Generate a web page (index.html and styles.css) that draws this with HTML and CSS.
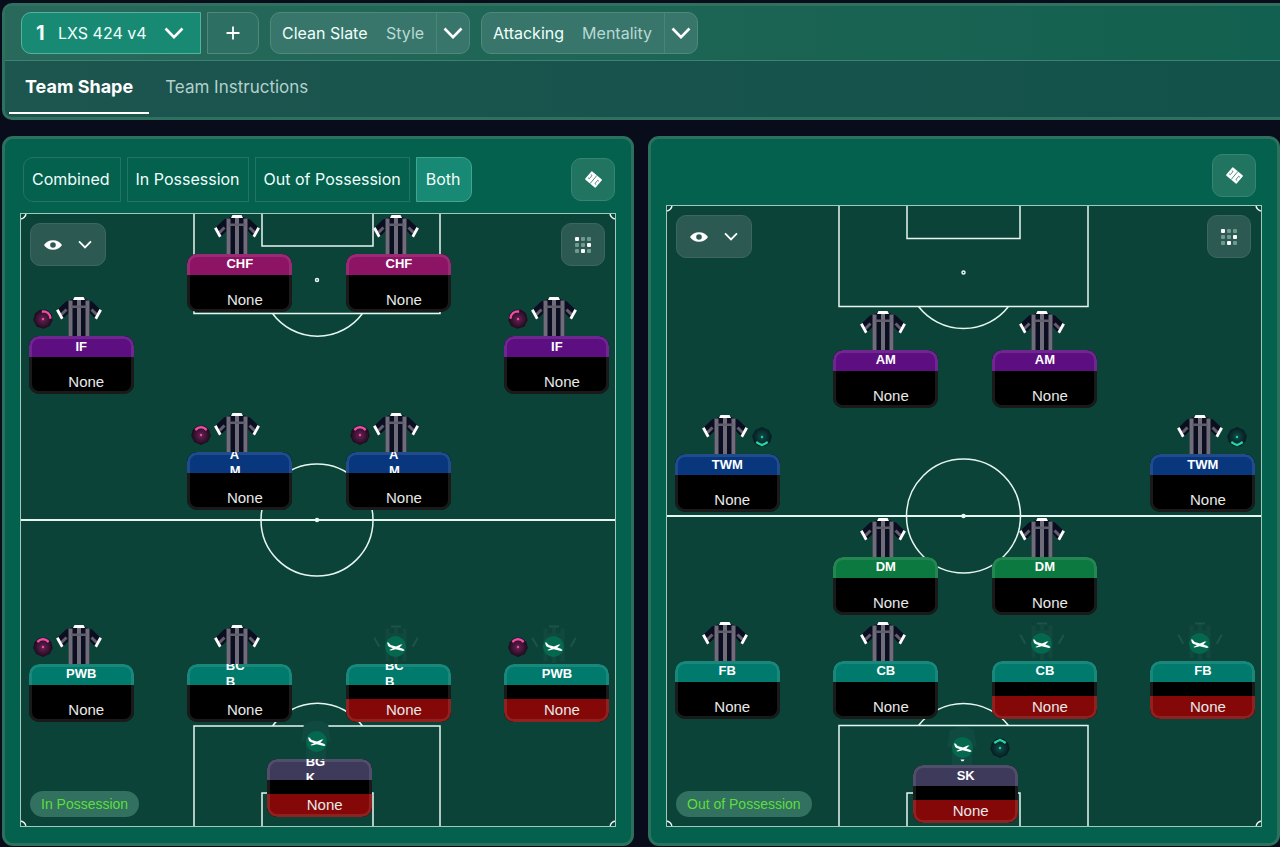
FILE: index.html
```html
<!DOCTYPE html>
<html lang="en">
<head>
<meta charset="utf-8">
<meta name="viewport" content="width=device-width, initial-scale=1">
<title>Team Shape</title>
<link rel="stylesheet" href="styles.css">
</head>
<body>
<svg class="sprite" aria-hidden="true">
  <defs>
    <radialGradient id="orb-pink-fill"><stop offset="0" stop-color="#6a2154"/><stop offset=".55" stop-color="#3f1535"/><stop offset="1" stop-color="#190a1c"/></radialGradient>
    <radialGradient id="orb-green-fill"><stop offset="0" stop-color="#0d5148"/><stop offset=".55" stop-color="#0a3033"/><stop offset="1" stop-color="#061a1d"/></radialGradient>
    <symbol id="chevron" viewBox="0 0 20 12"><path d="M1.500 1.500 10 10.200 18.500 1.500" fill="none" stroke="currentColor" stroke-width="2.600"/></symbol>
    <symbol id="eye" viewBox="0 0 18 12"><path fill="currentColor" fill-rule="evenodd" d="M0 6Q3 1.200 9 1.200T18 6Q15 10.800 9 10.800T0 6ZM9 3.200a2.800 2.800 0 1 0 0 5.600 2.800 2.800 0 0 0 0-5.600Z"/></symbol>
    <symbol id="grid" viewBox="0 0 16 16">
      <g fill="#6f9a92"><rect x="6" width="4" height="4" rx="1"/><rect x="12" width="4" height="4" rx="1"/><rect y="6" width="4" height="4" rx="1"/><rect x="6" y="6" width="4" height="4" rx="1"/><rect y="12" width="4" height="4" rx="1"/><rect x="12" y="12" width="4" height="4" rx="1"/></g>
      <g fill="#fff"><rect width="4" height="4" rx="1"/><rect x="12" y="6" width="4" height="4" rx="1"/><rect x="6" y="12" width="4" height="4" rx="1"/></g>
    </symbol>
    <symbol id="board" viewBox="0 0 16 16">
      <g transform="rotate(40 8 8)"><rect x="1.500" y="3" width="13" height="10" rx=".8" fill="#fff"/>
      <g fill="none" stroke="#24745f" stroke-width=".7"><path d="M8 3v10M3 6h1.500v4h-1.500M13 6h-1.500v4h1.500"/></g></g>
    </symbol>
    <symbol id="plane" viewBox="0 0 22 22">
      <circle cx="11" cy="11" r="10.500" fill="#04684f"/>
      <path fill="#fff" d="M2.500 7 4 7 6.200 9.600 11.500 11 16.200 9 18 9 14.800 12 18.500 13.200 20.200 14.800 18.500 15.600 11.200 13.800 6.200 15 4.800 14.600 8.500 12.800 5 11.400 3.600 10.400Z"/>
    </symbol>
    <symbol id="shirt" viewBox="0 0 46 40">
      <path fill="#0b0e20" d="M17 2 10 4.500 .5 13.500 6 22.500 12.500 16V40H34V16L40 22.500 45.500 13.500 36 4.500 29 2Z"/>
      <path fill="#706d7a" d="M12.500 3.500h4V40h-4ZM21 3h4v37h-4ZM29.500 3.500h4V40h-4Z"/>
      <path fill="#625f6d" d="M15 8.500h16v2.500H15Z"/>
      <path d="M5.500 17.500 10.500 12.500M40.500 17.500 35.500 12.500" stroke="#625f6d" stroke-width="3"/>
      <path d="M1.300 12.800 6.300 21.800M44.700 12.800 39.700 21.800" stroke="#fff" stroke-width="2.800"/>
      <path fill="#fff" d="M18.500 0h9l1.500 3H17Z"/>
    </symbol>
    <symbol id="shirt-away" viewBox="0 0 46 40">
      <path d="M12.500 3.500h4V36h-4ZM21 3h4v35h-4ZM29.500 3.500h4V36h-4ZM14 8.500h18v3H14Z" fill="#124840"/>
      <path d="M1.300 12.800 6.300 21.800M44.700 12.800 39.700 21.800" stroke="#1e5349" stroke-width="2"/>
      <path fill="#1e5349" d="M18 .5h10v2H18Z"/>
      <use href="#plane" x="11.500" y="10.500" width="22" height="22"/>
    </symbol>
    <symbol id="shirt-keeper" viewBox="0 0 46 40">
      <path fill="#10493f" d="M18 1h9l7 3 3 18-5-2v20H12V20l-5 2L10 4Z"/>
      <use href="#plane" x="11.500" y="10.500" width="22" height="22"/>
    </symbol>
    <symbol id="orb-pink" viewBox="0 0 20 20">
      <path fill="url(#orb-pink-fill)" d="m6.500.7 7 0 4.800 4.300 1.500 6-3 6L10 20l-6.800-3-3-6 1.500-6Z"/>
      <circle cx="10" cy="10" r="1.200" fill="#f04da5"/>
      <path d="M4.300 5 7 2.800 10 2.200 13 2.800 15.700 5" fill="none" stroke="#f04da5" stroke-width="2.300"/>
    </symbol>
    <symbol id="orb-green" viewBox="0 0 20 20">
      <path fill="url(#orb-green-fill)" d="m6.500.7 7 0 4.800 4.300 1.500 6-3 6L10 20l-6.800-3-3-6 1.500-6Z"/>
      <circle cx="10" cy="10" r="1.200" fill="#22cfa0"/>
      <path d="M4.300 5 7 3.200 10 2 13 3.200 15.700 5" fill="none" stroke="#22d6a5" stroke-width="2.300"/>
    </symbol>
  </defs>
</svg>

<header class="topbar">
  <div class="toolbar">
    <div class="tactic">
      <div class="picker picker-main">
        <span class="picker-number">1</span>
        <select class="picker-select" aria-label="Tactic"><option>LXS 424 v4</option></select>
        <svg class="chevron" aria-hidden="true"><use href="#chevron"/></svg>
      </div>
      <button class="add" type="button" aria-label="Add tactic"><svg class="plus" viewBox="0 0 14 14" aria-hidden="true"><path d="M7 .5v13M.5 7h13" stroke="#fff" stroke-width="1.800"/></svg></button>
    </div>
    <div class="picker">
      <select class="picker-select" id="style"><option>Clean Slate</option></select>
      <label class="picker-label" for="style">Style</label>
      <span class="picker-arrow"><svg class="chevron" aria-hidden="true"><use href="#chevron"/></svg></span>
    </div>
    <div class="picker">
      <select class="picker-select" id="mentality"><option>Attacking</option></select>
      <label class="picker-label" for="mentality">Mentality</label>
      <span class="picker-arrow"><svg class="chevron" aria-hidden="true"><use href="#chevron"/></svg></span>
    </div>
  </div>
  <nav class="tabs">
    <a class="tab tab-active" href="#shape" aria-current="page">Team Shape</a>
    <a class="tab" href="#instructions">Team Instructions</a>
  </nav>
</header>

<main class="panels" id="shape">
  <section class="panel">
    <div class="panel-head">
      <div class="segments">
        <button class="segment" type="button">Combined</button>
        <button class="segment" type="button">In Possession</button>
        <button class="segment" type="button">Out of Possession</button>
        <button class="segment segment-active" type="button" aria-pressed="true">Both</button>
      </div>
      <button class="icon-button" type="button" aria-label="Tactics board"><svg class="icon-board" aria-hidden="true"><use href="#board"/></svg></button>
    </div>
    <div class="pitch pitch-in">
      <svg class="lines" viewBox="0 0 596 614" aria-hidden="true">
        <path d="M174 0V100.500H420V0M242 0V33H353V0M174 614V513H420V614M242 614V580H353V614M252.500 100.500A56 56 0 0 0 342.500 100.500M252.500 513A56 56 0 0 1 342.500 513"/>
        <path d="M0 307H596" stroke-width="2"/>
        <path d="M6 0A6 6 0 0 1 0 6M590 0A6 6 0 0 0 596 6M0 608A6 6 0 0 1 6 614M596 608A6 6 0 0 0 590 614"/>
        <circle cx="297" cy="307" r="56"/><circle cx="297" cy="67" r="1.500"/><circle cx="297" cy="307" r="1.500" fill="#fff"/>
      </svg>
      <ul class="players">
        <li class="player col-2 in-1"><svg class="shirt"><use href="#shirt"/></svg><div class="card"><div class="role attack">CHF</div><div class="name">None</div></div></li>
        <li class="player col-3 in-1"><svg class="shirt"><use href="#shirt"/></svg><div class="card"><div class="role attack">CHF</div><div class="name">None</div></div></li>
        <li class="player col-1 in-2"><svg class="orb orb-ne"><use href="#orb-pink"/></svg><svg class="shirt"><use href="#shirt"/></svg><div class="card"><div class="role wing">IF</div><div class="name">None</div></div></li>
        <li class="player col-4 in-2"><svg class="orb orb-nw"><use href="#orb-pink"/></svg><svg class="shirt"><use href="#shirt"/></svg><div class="card"><div class="role wing">IF</div><div class="name">None</div></div></li>
        <li class="player col-2 in-3"><svg class="orb"><use href="#orb-pink"/></svg><svg class="shirt"><use href="#shirt"/></svg><div class="card"><div class="role midfield"><span class="wrap-two">A<br>M</span></div><div class="name">None</div></div></li>
        <li class="player col-3 in-3"><svg class="orb"><use href="#orb-pink"/></svg><svg class="shirt"><use href="#shirt"/></svg><div class="card"><div class="role midfield"><span class="wrap-two">A<br>M</span></div><div class="name">None</div></div></li>
        <li class="player col-1 in-4"><svg class="orb"><use href="#orb-pink"/></svg><svg class="shirt"><use href="#shirt"/></svg><div class="card"><div class="role back">PWB</div><div class="name">None</div></div></li>
        <li class="player col-2 in-4"><svg class="shirt"><use href="#shirt"/></svg><div class="card"><div class="role back"><span class="wrap-three">BC<br>B</span></div><div class="name">None</div></div></li>
        <li class="player col-3 in-4"><svg class="shirt"><use href="#shirt-away"/></svg><div class="card"><div class="role back"><span class="wrap-three">BC<br>B</span></div><div class="name name-away">None</div></div></li>
        <li class="player col-4 in-4"><svg class="orb"><use href="#orb-pink"/></svg><svg class="shirt"><use href="#shirt-away"/></svg><div class="card"><div class="role back">PWB</div><div class="name name-away">None</div></div></li>
        <li class="player col-keeper in-5"><svg class="shirt"><use href="#shirt-keeper"/></svg><div class="card"><div class="role keeper"><span class="wrap-three">BG<br>K</span></div><div class="name name-away">None</div></div></li>
      </ul>
      <button class="pitch-button view" type="button" aria-label="View options"><svg class="icon-eye" aria-hidden="true"><use href="#eye"/></svg><svg class="chevron-small" aria-hidden="true"><use href="#chevron"/></svg></button>
      <button class="pitch-button layout" type="button" aria-label="Formation"><svg class="icon-grid" aria-hidden="true"><use href="#grid"/></svg></button>
      <span class="phase">In Possession</span>
    </div>
  </section>

  <section class="panel">
    <div class="panel-head panel-head-plain">
      <button class="icon-button" type="button" aria-label="Tactics board"><svg class="icon-board" aria-hidden="true"><use href="#board"/></svg></button>
    </div>
    <div class="pitch pitch-out">
      <svg class="lines" viewBox="0 0 596 622" aria-hidden="true">
        <path d="M173 0V101.500H422V0M241 0V33.500H354V0M173 622V520.500H422V622M241 622V588H354V622M252.500 101.500A57 57 0 0 0 342.500 101.500M252.500 520.500A57 57 0 0 1 342.500 520.500"/>
        <path d="M0 311H596" stroke-width="2"/>
        <path d="M6 0A6 6 0 0 1 0 6M590 0A6 6 0 0 0 596 6M0 616A6 6 0 0 1 6 622M596 616A6 6 0 0 0 590 622"/>
        <circle cx="297.500" cy="311" r="57"/><circle cx="297.500" cy="67.500" r="1.500"/><circle cx="297.500" cy="311" r="1.500" fill="#fff"/>
      </svg>
      <ul class="players">
        <li class="player col-2 out-1"><svg class="shirt"><use href="#shirt"/></svg><div class="card"><div class="role wing">AM</div><div class="name">None</div></div></li>
        <li class="player col-3 out-1"><svg class="shirt"><use href="#shirt"/></svg><div class="card"><div class="role wing">AM</div><div class="name">None</div></div></li>
        <li class="player col-1 out-2"><svg class="shirt"><use href="#shirt"/></svg><svg class="orb orb-right orb-down"><use href="#orb-green"/></svg><div class="card"><div class="role midfield">TWM</div><div class="name">None</div></div></li>
        <li class="player col-4 out-2"><svg class="shirt"><use href="#shirt"/></svg><svg class="orb orb-right orb-down"><use href="#orb-green"/></svg><div class="card"><div class="role midfield">TWM</div><div class="name">None</div></div></li>
        <li class="player col-2 out-3"><svg class="shirt"><use href="#shirt"/></svg><div class="card"><div class="role holding">DM</div><div class="name">None</div></div></li>
        <li class="player col-3 out-3"><svg class="shirt"><use href="#shirt"/></svg><div class="card"><div class="role holding">DM</div><div class="name">None</div></div></li>
        <li class="player col-1 out-4"><svg class="shirt"><use href="#shirt"/></svg><div class="card"><div class="role back">FB</div><div class="name">None</div></div></li>
        <li class="player col-2 out-4"><svg class="shirt"><use href="#shirt"/></svg><div class="card"><div class="role back">CB</div><div class="name">None</div></div></li>
        <li class="player col-3 out-4"><svg class="shirt"><use href="#shirt-away"/></svg><div class="card"><div class="role back">CB</div><div class="name name-away">None</div></div></li>
        <li class="player col-4 out-4"><svg class="shirt"><use href="#shirt-away"/></svg><div class="card"><div class="role back">FB</div><div class="name name-away">None</div></div></li>
        <li class="player col-keeper out-5"><svg class="shirt" viewBox="0 0 46 40"><use href="#shirt-keeper"/><path d="M20.500 33.500h4l-1 1.800h-2Z" fill="#fff"/></svg><svg class="orb orb-right"><use href="#orb-green"/></svg><div class="card"><div class="role keeper">SK</div><div class="name name-away">None</div></div></li>
      </ul>
      <button class="pitch-button view" type="button" aria-label="View options"><svg class="icon-eye" aria-hidden="true"><use href="#eye"/></svg><svg class="chevron-small" aria-hidden="true"><use href="#chevron"/></svg></button>
      <button class="pitch-button layout" type="button" aria-label="Formation"><svg class="icon-grid" aria-hidden="true"><use href="#grid"/></svg></button>
      <span class="phase">Out of Possession</span>
    </div>
  </section>
</main>
</body>
</html>
```
FILE: styles.css
```css
* { box-sizing: border-box; }

body {
  margin: 0;
  padding: 3px 0 1px 2px;
  background: #090d1b;
  color: #f1fffb;
  font: 16px/20px Inter, "Liberation Sans", sans-serif;
}

button, select { font: inherit; color: inherit; cursor: pointer; }
.sprite { position: absolute; width: 0; height: 0; }

/* Top bar */
.topbar {
  border: 3px solid #30705f;
  border-right: 0;
  border-radius: 10px 0 0 10px;
  background: linear-gradient(90deg, #1d554f, #12524a);
  overflow: hidden;
}
.toolbar {
  display: flex;
  gap: 11px;
  padding: 6px 16px;
  border-bottom: 1px solid #3b8272;
  background: linear-gradient(90deg, #28695b, #12604f);
}
.tactic { display: flex; gap: 6px; }
.picker {
  display: flex;
  align-items: center;
  height: 42px;
  padding-left: 11px;
  border: 1px solid #50887c;
  border-radius: 10px;
  background: #38766b;
}
.picker-main {
  width: 180px;
  padding: 0 16px 0 14px;
  border-color: #57b29d;
  border-radius: 10px 0 0 10px;
  background: #188a74;
}
.picker-number { width: 22px; font-size: 20px; font-weight: 700; }
.picker-main .picker-select { flex: 1; }
.picker-select {
  appearance: none;
  padding: 0;
  border: 0;
  background: transparent;
}
.picker-label { padding: 0 12px 0 18px; color: #bad8d4; }
.picker-arrow {
  display: grid;
  place-items: center;
  width: 33px;
  height: 100%;
  border-left: 1px solid #4a8378;
}
.chevron { width: 20px; height: 12px; color: #fff; pointer-events: none; }
.add {
  display: grid;
  place-items: center;
  width: 52px;
  padding: 0;
  border: 1px solid #50887c;
  border-radius: 0 10px 10px 0;
  background: #2d7063;
}
.plus { width: 14px; height: 14px; }
.tabs { display: flex; padding: 0 4px 3px; }
.tab {
  padding: 16px 16px 15px;
  border-bottom: 2px solid transparent;
  color: #b4d0cd;
  font-size: 17px;
  text-decoration: none;
}
.tab-active { border-color: #fff; color: #fff; font-size: 18px; font-weight: 700; }

/* Panels */
.panels {
  display: grid;
  grid-template-columns: 1fr 1fr;
  gap: 14px;
  align-items: start;
  margin-top: 16px;
}
.panel {
  padding: 0 15px 16px;
  border: 3px solid #2d705e;
  border-radius: 11px;
  background: #03614e;
}
.panel-head {
  display: flex;
  align-items: center;
  justify-content: space-between;
  padding: 18px 1px 11px 3px;
}
.panel-head-plain { justify-content: flex-end; padding: 15px 6px 8px; }
.segments { display: flex; gap: 6px; }
.segment {
  height: 45px;
  padding: 0 8px 1px;
  border: 1px solid #25745f;
  background: transparent;
}
.segment:first-child { padding: 0 10px 1px 8px; border-radius: 10px 0 0 10px; }
.segment:last-child { padding: 0 10px 1px 9px; border-radius: 0 10px 10px 0; }
.segment-active { border-color: #46a38e; background: #188974; }
.icon-button {
  display: grid;
  place-items: center;
  width: 44px;
  height: 43px;
  padding: 0;
  border: 1px solid #368570;
  border-radius: 10px;
  background: #207460;
}
.icon-board { width: 17px; height: 17px; }

/* Pitch */
.pitch { position: relative; background: #0c4339; }
.pitch::after {
  content: "";
  position: absolute;
  inset: 0;
  border: 1px solid #9fcabd;
  pointer-events: none;
}
.pitch-in { aspect-ratio: 596 / 614; }
.pitch-out { aspect-ratio: 596 / 622; }
.lines {
  display: block;
  width: 100%;
  height: 100%;
  fill: none;
  stroke: #e6f7f1;
  stroke-width: 1.500;
}
.pitch-button {
  position: absolute;
  top: 10px;
  display: flex;
  align-items: center;
  justify-content: center;
  height: 43px;
  padding: 0;
  border: 1px solid #3b675f;
  border-radius: 10px;
  background: #2c5a52;
  color: #fff;
}
.view { left: 10px; width: 76px; gap: 16px; }
.layout { right: 11px; width: 44px; }
.icon-eye { width: 18px; height: 12px; }
.chevron-small { width: 14px; height: 9px; }
.icon-grid { width: 16px; height: 16px; }
.phase {
  position: absolute;
  left: 10px;
  bottom: 10px;
  padding: 0 11px;
  border-radius: 13px;
  background: #32705f;
  color: #5cdf3c;
  font: 14px/26px "Liberation Sans", sans-serif;
}

/* Players */
.players { margin: 0; padding: 0; list-style: none; }
.player {
  position: absolute;
  width: 105px;
  padding-top: 39px;
  margin-left: -52px;
  font-family: "Liberation Sans", sans-serif;
}
.shirt { position: absolute; top: 0; left: 27px; width: 46px; height: 40px; }
.orb { position: absolute; top: 12px; left: 4px; width: 20px; height: 20px; }
.orb-right { left: 77px; }
.orb-ne { transform: rotate(40deg); }
.orb-nw { transform: rotate(-40deg); }
.orb-down { transform: rotate(180deg); }
.card {
  position: relative;
  height: 58px;
  border-radius: 10px;
  background: #000;
  overflow: hidden;
}
.card::after {
  content: "";
  position: absolute;
  inset: 0;
  border: 3px solid rgba(255, 255, 255, .1);
  border-radius: 10px;
}
.role {
  display: flex;
  align-items: center;
  justify-content: center;
  height: 21px;
  overflow: hidden;
  color: #fff;
  font-size: 13px;
  font-weight: 700;
  line-height: 16px;
}
.wrap-two { width: 20px; }
.wrap-three { width: 28px; }
.name {
  height: 23px;
  margin-top: 14px;
  padding-left: 10px;
  color: #e9e9e9;
  font-size: 15px;
  line-height: 21px;
  text-align: center;
}
.name-away { background: #840808; }
.attack { background: #8d1464; }
.wing { background: #5d0f82; }
.midfield { background: #08377d; }
.back { background: #007a6d; }
.holding { background: #0c7a40; }
.keeper { background: #3e3a5c; }

/* Places on the pitch */
.col-1 { left: 10.2%; }
.col-2 { left: 36.8%; }
.col-3 { left: 63.5%; }
.col-4 { left: 90%; }
.col-keeper { left: 50.2%; }
.in-1 { top: .3%; }
.in-2 { top: 13.7%; }
.in-3 { top: 32.6%; }
.in-4 { top: 67.1%; }
.in-5 { top: 82.6%; }
.out-1 { top: 17%; }
.out-2 { top: 33.8%; }
.out-3 { top: 50.3%; }
.out-4 { top: 67%; }
.out-5 { top: 83.8%; }
```
